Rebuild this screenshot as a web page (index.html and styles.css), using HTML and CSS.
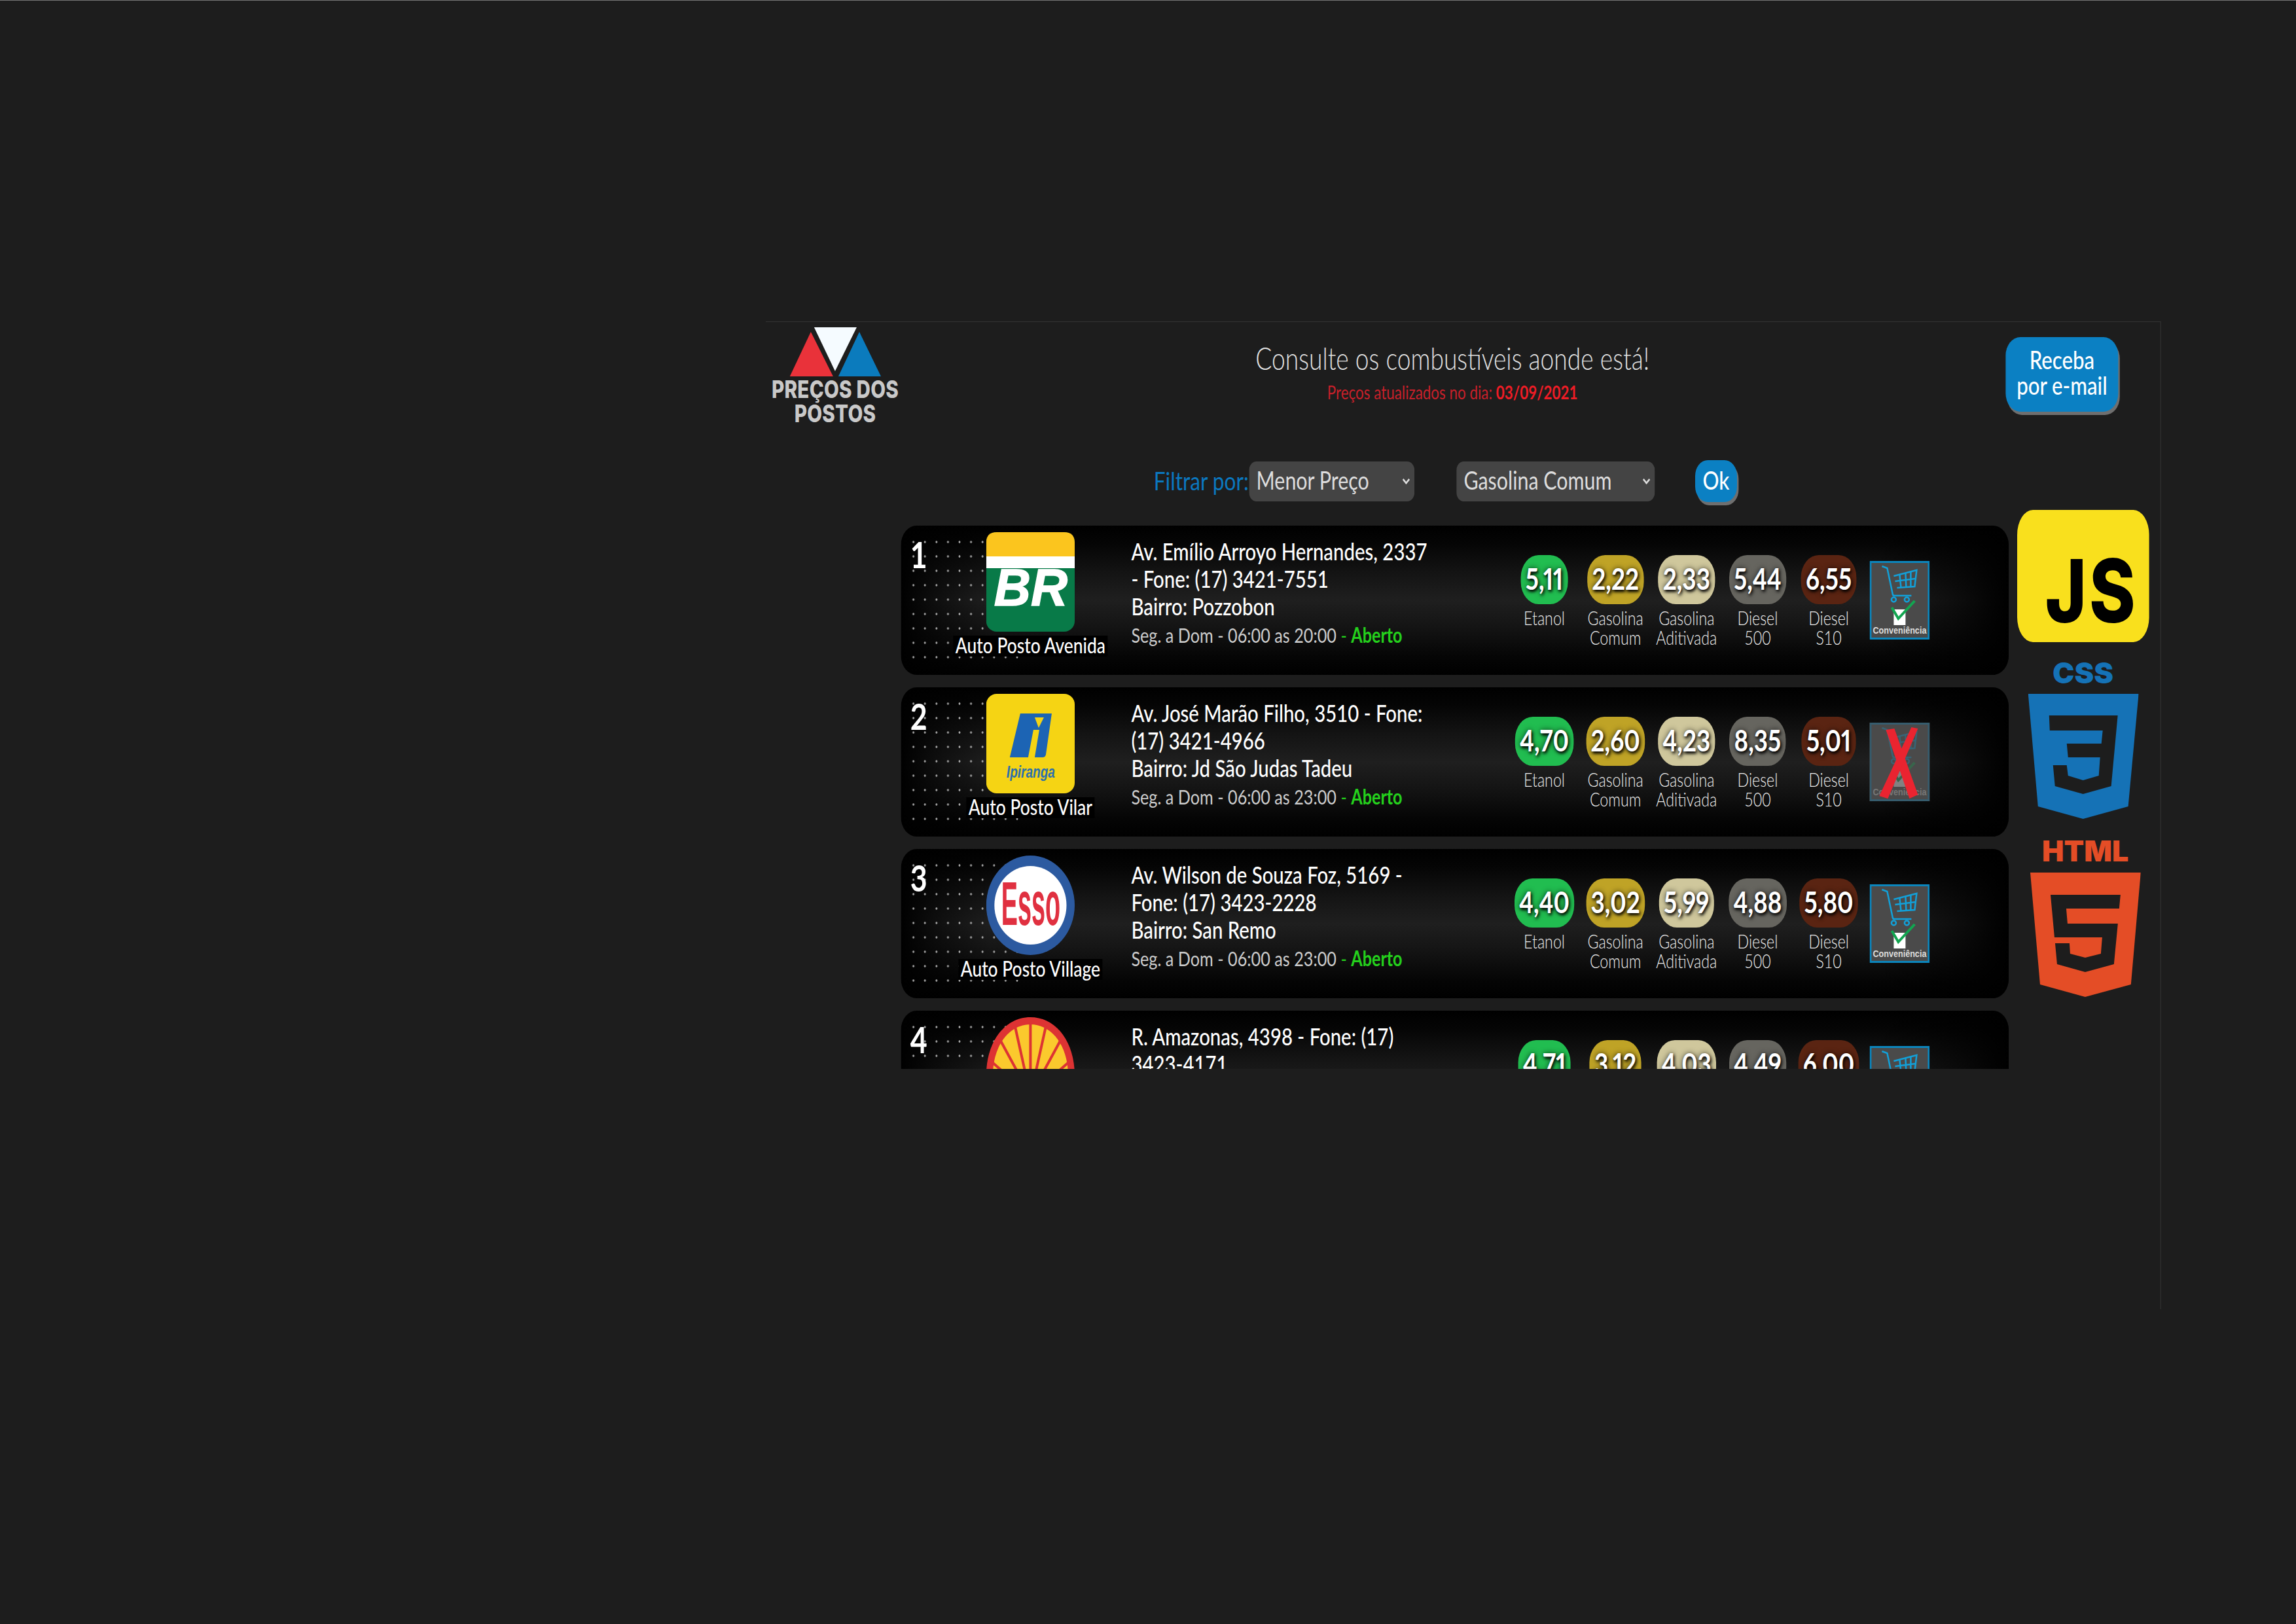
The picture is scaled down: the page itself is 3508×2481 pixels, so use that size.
FILE: index.html
```html
<!DOCTYPE html>
<html lang="pt-BR">
<head>
    <meta charset="UTF-8">
    <title>Preços dos Postos</title>
    <link rel="stylesheet" href="styles.css">
</head>
<body>

    <!-- Shared cart icon -->
    <svg class="defs" aria-hidden="true">
        <symbol id="cart" viewBox="0 0 92 120" preserveAspectRatio="none">
            <rect x="1.5" y="1.5" width="89" height="117" fill="#4a4a4a" stroke="#0b86bd" stroke-width="3"/>
            <g fill="none" stroke="#12a0d8" stroke-width="2.5">
                <path d="M19 8 L27 11 L35 49 Q35 53 38 53 L64 53"/>
                <path d="M37 23 L72 14 L69 39 L42 41"/>
                <path d="M46 21 L48 40 M55 19 L56 40 M63 16 L63 39 M39 31 L70 27"/>
                <circle cx="37" cy="59" r="3.5"/>
                <circle cx="57" cy="59" r="3.5"/>
            </g>
            <rect x="37" y="74" width="18" height="24" fill="#fff"/>
            <path d="M34 71 L44 88 L69 61" fill="none" stroke="#12a550" stroke-width="4"/>
            <text x="5" y="111" textLength="82" lengthAdjust="spacingAndGlyphs" class="conv-text">Conveniência</text>
        </symbol>
    </svg>

    <div class="panel">

        <!-- Header -->
        <div class="header">
            <div class="logo">
                <svg class="logo-tri" viewBox="0 0 139 75" preserveAspectRatio="none">
                    <polygon points="32,7 0,75 66,75" fill="#e9323a"/>
                    <polygon points="106,7 74,75 139,75" fill="#0b7bbd"/>
                    <polygon points="37,0 102,0 69,67" fill="#f5fbff"/>
                </svg>
                <div class="logo-text">PREÇOS DOS<br>POSTOS</div>
            </div>
            <div class="title">
                <h1>Consulte os combustíveis aonde está!</h1>
                <p>Preços atualizados no dia: <b>03/09/2021</b></p>
            </div>
            <button class="email-btn">Receba<br>por e-mail</button>
        </div>

        <!-- Filter -->
        <div class="filter">
            <label>Filtrar por:</label>
            <select class="sel-order"><option>Menor Preço</option></select>
            <select class="sel-fuel"><option>Gasolina Comum</option></select>
            <button class="ok-btn">Ok</button>
        </div>

        <div class="main">
            <div class="list">

                <div class="row">
                    <div class="num">1</div>
                    <div class="brand">
                        <svg class="brand-logo" viewBox="0 0 135 152" preserveAspectRatio="none">
                            <rect width="135" height="152" rx="16" fill="#087a48"/>
                            <path d="M0 37 V16 Q0 0 16 0 H119 Q135 0 135 16 V37 Z" fill="#fbc51e"/>
                            <rect y="37" width="135" height="18" fill="#fff"/>
                            <text x="12" y="112" textLength="112" lengthAdjust="spacingAndGlyphs" class="br-text">BR</text>
                        </svg>
                        <span class="brand-name">Auto Posto Avenida</span>
                    </div>
                    <div class="address">
                        <p>Av. Emílio Arroyo Hernandes, 2337<br>- Fone: (17) 3421-7551</p>
                        <p>Bairro: Pozzobon</p>
                        <p class="hours">Seg. a Dom - 06:00 as 20:00 <span class="open">- <b>Aberto</b></span></p>
                    </div>
                    <div class="fuels">
                        <div class="fuel"><span class="price etanol">5,11</span><span class="fuel-name">Etanol</span></div>
                        <div class="fuel"><span class="price comum">2,22</span><span class="fuel-name">Gasolina Comum</span></div>
                        <div class="fuel"><span class="price aditivada">2,33</span><span class="fuel-name">Gasolina Aditivada</span></div>
                        <div class="fuel"><span class="price d500">5,44</span><span class="fuel-name">Diesel 500</span></div>
                        <div class="fuel"><span class="price s10">6,55</span><span class="fuel-name">Diesel S10</span></div>
                    </div>
                    <svg class="conv"><use href="#cart"/></svg>
                </div>

                <div class="row">
                    <div class="num">2</div>
                    <div class="brand">
                        <svg class="brand-logo" viewBox="0 0 135 152" preserveAspectRatio="none">
                            <rect width="135" height="152" rx="16" fill="#f5d414"/>
                            <path d="M52 30 L100 30 L91 93 Q90 97 86 97 L74 97 L81 55 L72 55 L64 97 L36 97 Z" fill="#1c64b4"/>
                            <polygon points="74,36 88,36 80,52" fill="#f5d414"/>
                            <text x="31" y="128" textLength="74" lengthAdjust="spacingAndGlyphs" class="ipi-text">Ipiranga</text>
                        </svg>
                        <span class="brand-name">Auto Posto Vilar</span>
                    </div>
                    <div class="address">
                        <p>Av. José Marão Filho, 3510 - Fone:<br>(17) 3421-4966</p>
                        <p>Bairro: Jd São Judas Tadeu</p>
                        <p class="hours">Seg. a Dom - 06:00 as 23:00 <span class="open">- <b>Aberto</b></span></p>
                    </div>
                    <div class="fuels">
                        <div class="fuel"><span class="price etanol">4,70</span><span class="fuel-name">Etanol</span></div>
                        <div class="fuel"><span class="price comum">2,60</span><span class="fuel-name">Gasolina Comum</span></div>
                        <div class="fuel"><span class="price aditivada">4,23</span><span class="fuel-name">Gasolina Aditivada</span></div>
                        <div class="fuel"><span class="price d500">8,35</span><span class="fuel-name">Diesel 500</span></div>
                        <div class="fuel"><span class="price s10">5,01</span><span class="fuel-name">Diesel S10</span></div>
                    </div>
                    <div class="conv-off">
                        <svg class="conv faded"><use href="#cart"/></svg>
                        <svg class="conv-x" viewBox="0 0 92 120" preserveAspectRatio="none">
                            <polygon points="25,11 38,9 74,110 61,116" fill="#ea2430"/>
                            <polygon points="64,7 74,9 28,116 15,112" fill="#ea2430"/>
                        </svg>
                    </div>
                </div>

                <div class="row">
                    <div class="num">3</div>
                    <div class="brand">
                        <svg class="brand-logo" viewBox="0 0 135 152" preserveAspectRatio="none">
                            <ellipse cx="67.5" cy="76" rx="67.5" ry="76" fill="#2c5aa0"/>
                            <ellipse cx="67.5" cy="76" rx="55" ry="60" fill="#fff"/>
                            <text x="23" y="106" textLength="90" lengthAdjust="spacingAndGlyphs" class="esso-text">Esso</text>
                        </svg>
                        <span class="brand-name">Auto Posto Village</span>
                    </div>
                    <div class="address">
                        <p>Av. Wilson de Souza Foz, 5169 -<br>Fone: (17) 3423-2228</p>
                        <p>Bairro: San Remo</p>
                        <p class="hours">Seg. a Dom - 06:00 as 23:00 <span class="open">- <b>Aberto</b></span></p>
                    </div>
                    <div class="fuels">
                        <div class="fuel"><span class="price etanol">4,40</span><span class="fuel-name">Etanol</span></div>
                        <div class="fuel"><span class="price comum">3,02</span><span class="fuel-name">Gasolina Comum</span></div>
                        <div class="fuel"><span class="price aditivada">5,99</span><span class="fuel-name">Gasolina Aditivada</span></div>
                        <div class="fuel"><span class="price d500">4,88</span><span class="fuel-name">Diesel 500</span></div>
                        <div class="fuel"><span class="price s10">5,80</span><span class="fuel-name">Diesel S10</span></div>
                    </div>
                    <svg class="conv"><use href="#cart"/></svg>
                </div>

                <div class="row">
                    <div class="num">4</div>
                    <div class="brand">
                        <svg class="brand-logo" viewBox="0 0 135 152" preserveAspectRatio="none">
                            <path d="M0 90 C0 35 30 0 67.5 0 C105 0 135 35 135 90 L118 140 H17 Z" fill="#dd3333"/>
                            <path d="M10 90 C10 42 36 11 67.5 11 C99 11 125 42 125 90 L110 130 H25 Z" fill="#fbc92d"/>
                            <path d="M67.5 120 V8 M67.5 120 L44 14 M67.5 120 L91 14 M67.5 120 L22 36 M67.5 120 L113 36 M67.5 120 L6 66 M67.5 120 L129 66" stroke="#dd3333" stroke-width="4" fill="none"/>
                        </svg>
                    </div>
                    <div class="address">
                        <p>R. Amazonas, 4398 - Fone: (17)<br>3423-4171</p>
                    </div>
                    <div class="fuels">
                        <div class="fuel"><span class="price etanol">4,71</span><span class="fuel-name">Etanol</span></div>
                        <div class="fuel"><span class="price comum">3,12</span><span class="fuel-name">Gasolina Comum</span></div>
                        <div class="fuel"><span class="price aditivada">4,03</span><span class="fuel-name">Gasolina Aditivada</span></div>
                        <div class="fuel"><span class="price d500">4,49</span><span class="fuel-name">Diesel 500</span></div>
                        <div class="fuel"><span class="price s10">6,00</span><span class="fuel-name">Diesel S10</span></div>
                    </div>
                    <svg class="conv"><use href="#cart"/></svg>
                </div>

            </div>

            <!-- Tech logos -->
            <div class="side">
                <div class="js-logo">JS</div>
                <div class="css-name">CSS</div>
                <svg class="shield" viewBox="0 0 169 191" preserveAspectRatio="none">
                    <polygon points="0,0 169,0 153,172 84,191 15,172" fill="#1572b6"/>
                    <polygon points="32,33 137,33 127,141 84,153 41,141 38,109 59,109 61,125 84,132 108,125 110,97 61,97 59,76 112,76 114,56 33,56" fill="#1d1d1d"/>
                </svg>
                <div class="html-name">HTML</div>
                <svg class="shield html-shield" viewBox="0 0 169 191" preserveAspectRatio="none">
                    <polygon points="0,0 169,0 154,171 84,190 15,171" fill="#e44d26"/>
                    <polygon points="31,34 138,34 136,55 55,55 57,78 134,78 128,140 84,152 41,140 38,108 60,108 61,124 84,130 108,124 110,99 37,99" fill="#1d1d1d"/>
                </svg>
            </div>
        </div>
    </div>

</body>
</html>
```

FILE: styles.css
```css
body {
    margin: 0;
    border-top: 1px solid #777;
    background-color: #1d1d1d;
    font-family: "Lato", "Open Sans", sans-serif;
    color: #fff;
    overflow: hidden;
}
p, h1 {
    margin: 0;
}
.defs {
    display: none;
}
/* The whole panel is squeezed sideways, so widths below are 1.25x the drawn size */
.panel {
    width: 2665px;
    height: 1509px;
    margin-top: 490px;
    box-sizing: border-box;
    border-top: 1px solid #333;
    border-right: 2px solid #2c2c2c;
    transform: translateX(1170px) scaleX(0.8);
    transform-origin: 0 0;
}
/* Header */
.header {
    display: flex;
    height: 211px;
    padding: 8px 80px 0 10px;
    box-sizing: border-box;
}
.logo {
    width: 245px;
    text-align: center;
}
.logo-tri {
    display: block;
    width: 174px;
    height: 75px;
    margin: 0 auto;
}
.logo-text {
    margin-top: 1px;
    font-family: "Inter", sans-serif;
    font-weight: 800;
    font-size: 37px;
    line-height: 37px;
    letter-spacing: 0.3px;
    color: #c9c9c9;
}
.title {
    flex: 1;
    text-align: center;
    padding-top: 19px;
}
.title h1 {
    font-size: 46.5px;
    font-weight: 300;
    line-height: 56px;
    color: #e2e2e2;
}
.title p {
    margin-top: 7px;
    font-size: 28px;
    font-weight: 400;
    color: #c8202a;
}
.title b {
    font-weight: 700;
    color: #ee1c25;
}
.email-btn {
    width: 215px;
    height: 114px;
    margin-top: 15px;
    padding: 0 0 6px;
    border: none;
    border-radius: 28px;
    background-color: #0b80c3;
    box-shadow: 3px 5px 0 #6f6f6f;
    color: white;
    font-family: inherit;
    font-size: 39px;
    font-weight: 500;
    line-height: 39px;
}
/* Filter */
.filter {
    display: flex;
    align-items: center;
    height: 64px;
    padding-left: 741px;
}
.filter label {
    width: 182px;
    padding-bottom: 4px;
    color: #0b78c0;
    font-size: 39.5px;
}
.filter select {
    height: 61px;
    padding: 0 14px 4px;
    border: none;
    border-radius: 14px;
    appearance: none;
    background: #444 url("data:image/svg+xml,%3Csvg xmlns='http://www.w3.org/2000/svg' viewBox='0 0 16 10'%3E%3Cpath d='M2 2 L8 8 L14 2' fill='none' stroke='%23ddd' stroke-width='3'/%3E%3C/svg%3E") no-repeat right 8px center / 16px 10px;
    color: #ddd;
    font-family: inherit;
    font-size: 38px;
}
.sel-order {
    width: 316px;
}
.sel-fuel {
    width: 379px;
    margin-left: 80px;
}
.ok-btn {
    width: 80px;
    height: 64px;
    margin-left: 77px;
    padding: 0 0 4px;
    border: none;
    border-radius: 24px;
    background-color: #0b80c3;
    box-shadow: 3px 5px 0 #6f6f6f;
    color: white;
    font-family: inherit;
    font-size: 39px;
    font-weight: 500;
}
/* Station list */
.main {
    display: flex;
    gap: 16px;
    margin-top: 12px;
    padding-left: 258px;
}
.list {
    display: flex;
    flex-direction: column;
    gap: 19px;
    width: 2116px;
    height: 830px;
    margin-top: 24px;
    overflow: hidden;
}
.row {
    position: relative;
    display: flex;
    flex-shrink: 0;
    height: 228px;
    padding-right: 151px;
    box-sizing: border-box;
    border-radius: 30px;
    background:
        linear-gradient(to right, #000, rgba(0, 0, 0, .55) 3%, transparent 8%, transparent 88%, rgba(0, 0, 0, .55) 95%, #000),
        linear-gradient(#000, #050505 12%, #141414 32%, #1f1f1f 50%, #141414 68%, #050505 88%, #000);
}
/* dotted texture behind the number and logo */
.row::before {
    content: "";
    position: absolute;
    left: 13px;
    top: 14px;
    width: 222px;
    height: 198px;
    background-image: radial-gradient(circle, #aaa 1.3px, transparent 2.2px);
    background-size: 22px 22px;
}
.num {
    position: relative;
    width: 60px;
    padding: 14px 0 0 18px;
    box-sizing: border-box;
    font-size: 56px;
    font-weight: 700;
    line-height: 60px;
}
.brand {
    position: relative;
    display: flex;
    flex-direction: column;
    align-items: center;
    width: 375px;
    padding-top: 10px;
}
.brand-logo {
    display: block;
    width: 169px;
    height: 152px;
}
.brand-name {
    margin-top: 6px;
    padding: 0 4px 4px;
    background-color: #000;
    font-size: 33px;
    font-weight: 500;
    line-height: 28px;
}
.br-text {
    font-family: "Liberation Sans", sans-serif;
    font-weight: 700;
    font-style: italic;
    font-size: 80px;
    fill: #fff;
    stroke: #fff;
    stroke-width: 1.5;
}
.ipi-text {
    font-family: "Liberation Sans", sans-serif;
    font-weight: 700;
    font-style: italic;
    font-size: 26px;
    fill: #2b6fad;
}
.esso-text {
    font-family: "Liberation Sans", sans-serif;
    font-weight: 700;
    font-size: 94px;
    fill: #e03040;
}
.address {
    flex: 1;
    padding: 18px 0 0 5px;
    font-size: 36.7px;
    font-weight: 500;
    line-height: 42px;
}
.hours {
    margin-top: 2px;
    font-size: 31.5px;
    font-weight: 400;
    color: #ccc;
}
.open {
    color: #24d01c;
}
.open b {
    font-weight: 700;
}
.fuels {
    display: flex;
    width: 679px;
    padding-top: 45px;
}
.fuel {
    display: flex;
    flex-direction: column;
    align-items: center;
    width: 135.8px;
    text-align: center;
}
.price {
    height: 75px;
    padding: 0 9px;
    border-radius: 34px;
    font-size: 46px;
    font-weight: 700;
    font-variant-numeric: proportional-nums;
    line-height: 72px;
    text-shadow: 2px 3px 5px #000, 0 0 10px rgba(0, 0, 0, .7);
}
.etanol { background-color: #21bd50; }
.comum { background-color: #bfa326; }
.aditivada { background-color: #cfc79c; }
.d500 { background-color: #66655f; }
.s10 { background-color: #5a2412; }
.fuel-name {
    width: 120px;
    margin-top: 6px;
    color: #eee;
    font-size: 29px;
    font-weight: 300;
    line-height: 29.5px;
}
.conv, .conv-off {
    display: block;
    flex-shrink: 0;
    width: 115px;
    height: 120px;
    margin: 54px 0 0 10px;
}
.conv-off {
    position: relative;
    background-color: #4a4a4a;
}
.conv-off .conv {
    margin: 0;
}
.faded {
    opacity: 0.3;
}
.conv-x {
    position: absolute;
    left: 0;
    top: 0;
    width: 115px;
    height: 120px;
}
.conv-text {
    font-family: "Liberation Sans", sans-serif;
    font-weight: 700;
    font-size: 15px;
    fill: #ddd;
}
/* Tech logos */
.side {
    display: flex;
    flex-direction: column;
    align-items: center;
    width: 252px;
}
.js-logo {
    display: flex;
    align-items: flex-end;
    justify-content: flex-end;
    width: 252px;
    height: 202px;
    padding: 0 21px 29px 0;
    box-sizing: border-box;
    border-radius: 30px / 38px;
    background-color: #f9e01d;
    color: #000;
    font-family: "Inter", sans-serif;
    font-weight: 800;
    font-size: 134px;
    letter-spacing: 5px;
    line-height: 100px;
}
.css-name, .html-name {
    font-family: "Inter", sans-serif;
    font-weight: 900;
    font-size: 44px;
    line-height: 33px;
    transform: scaleX(1.27);
}
.css-name {
    margin-top: 31px;
    color: #1572b6;
}
.html-name {
    margin: 33px 0 0 8px;
    color: #e44d26;
}
.shield {
    flex-shrink: 0;
    width: 211px;
    height: 191px;
    margin-top: 15px;
}
.html-shield {
    margin: 16px 0 0 8px;
}
```
